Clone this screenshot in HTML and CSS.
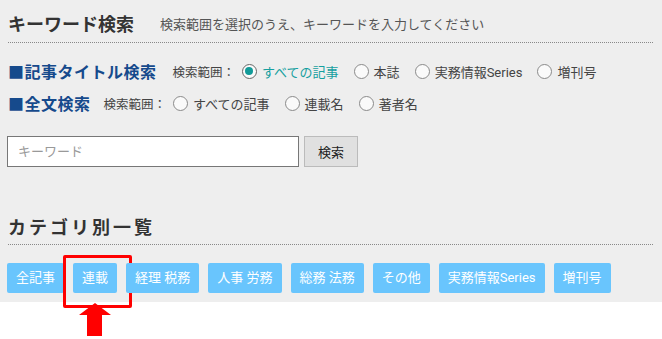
FILE: index.html
```html
<!DOCTYPE html>
<html lang="ja">
<head>
<meta charset="utf-8">
<link rel="stylesheet" href="styles.css">
</head>
<body>
<div class="panel">
  <div class="head">
    <h2 class="title">キーワード検索</h2>
    <span class="sub">検索範囲を選択のうえ、キーワードを入力してください</span>
  </div>
  <div class="row row1">
    <span class="label">■記事タイトル検索</span>
    <span class="range">検索範囲：</span>
    <span class="opt on"><span class="radio"></span>すべての記事</span>
    <span class="opt"><span class="radio"></span>本誌</span>
    <span class="opt"><span class="radio"></span>実務情報Series</span>
    <span class="opt"><span class="radio"></span>増刊号</span>
  </div>
  <div class="row row2">
    <span class="label">■全文検索</span>
    <span class="range">検索範囲：</span>
    <span class="opt"><span class="radio"></span>すべての記事</span>
    <span class="opt"><span class="radio"></span>連載名</span>
    <span class="opt"><span class="radio"></span>著者名</span>
  </div>
  <div class="search">
    <input class="kw" type="text" placeholder="キーワード">
    <button class="go">検索</button>
  </div>
  <div class="head cat-head">
    <h2 class="title cat">カテゴリ別一覧</h2>
  </div>
  <div class="cats">
    <span class="chip">全記事</span>
    <span class="chip marked">連載</span>
    <span class="chip">経理 税務</span>
    <span class="chip">人事 労務</span>
    <span class="chip">総務 法務</span>
    <span class="chip">その他</span>
    <span class="chip">実務情報Series</span>
    <span class="chip">増刊号</span>
  </div>
</div>
<div class="arrow">
  <svg width="32" height="34" viewBox="0 0 32 34"><polygon points="16,0 32,12 23,12 23,33 8,33 8,12 0,12" fill="#ff0000"/></svg>
</div>
</body>
</html>
```
FILE: styles.css
```css
* { box-sizing: border-box; }
html, body { margin: 0; padding: 0; background: #fff; }
body {
  font-family: Roboto, "Noto Sans CJK JP", "Noto Sans", sans-serif;
  color: #333;
  width: 662px;
  height: 339px;
  overflow: hidden;
  position: relative;
}
.panel {
  background: #eeeeee;
  padding: 0 9px 9px 8px;
}
.head {
  display: flex;
  align-items: center;
  height: 43px;
  padding-top: 12px;
  padding-bottom: 4px;
  border-bottom: 1px dotted #888;
}
.title {
  margin: 0;
  font-size: 18px;
  line-height: 26px;
  font-weight: 700;
  color: #333;
}
.sub {
  margin-left: 26px;
  font-size: 13px;
  color: #555;
  line-height: 26px;
}
.row {
  display: flex;
  align-items: center;
  height: 24px;
  font-size: 13px;
  color: #444;
}
.row1 { margin-top: 16px; }
.row2 { margin-top: 8px; }
.label {
  font-size: 16px;
  font-weight: 700;
  letter-spacing: 0.5px;
  color: #164a8c;
}
.row1 .label { margin-right: 16px; }
.row2 .label { margin-right: 13px; }
.range { margin-right: 7px; font-size: 12.5px; }
.opt {
  display: flex;
  align-items: center;
  margin-right: 15px;
}
.radio {
  width: 15px;
  height: 15px;
  border: 1px solid #8a8a8a;
  border-radius: 50%;
  margin-right: 5px;
  background: #fafafa;
  position: relative;
}
.opt.on { color: #16a0a0; }
.opt.on .radio { border: 1.5px solid #666; }
.opt.on .radio::after {
  content: "";
  position: absolute;
  left: 2px; top: 2px;
  width: 8px; height: 8px;
  border-radius: 50%;
  background: #119a98;
}
.search {
  display: flex;
  margin-top: 21px;
  margin-left: -1px;
}
.kw {
  width: 292px;
  height: 31px;
  border: 1px solid #777;
  background: #fff;
  font-family: inherit;
  font-size: 13px;
  padding: 0 10px;
  outline: none;
}
.kw::placeholder { color: #999; }
.go {
  margin-left: 5px;
  width: 54px;
  height: 31px;
  border: 1px solid #bbb;
  background: #e0e0e0;
  font-family: inherit;
  font-size: 13px;
  color: #222;
  padding: 0;
}
.cat-head {
  margin-top: 35px;
  padding-top: 13px;
  padding-bottom: 3px;
}
.cat { letter-spacing: 3px; }
.cats {
  display: flex;
  gap: 9px;
  margin-top: 18px;
  margin-left: -1px;
}
.chip {
  height: 30px;
  line-height: 30px;
  padding: 0 9px;
  background: #69c5fd;
  color: #fff;
  font-size: 13px;
  border-radius: 2px;
  position: relative;
}
.chip.marked::after {
  content: "";
  position: absolute;
  left: -10px; top: -8px;
  width: 63px; height: 47px;
  border: 3.5px solid #ff0000;
  border-radius: 2px;
}
.arrow {
  position: absolute;
  left: 79px;
  top: 303px;
  line-height: 0;
}
```
